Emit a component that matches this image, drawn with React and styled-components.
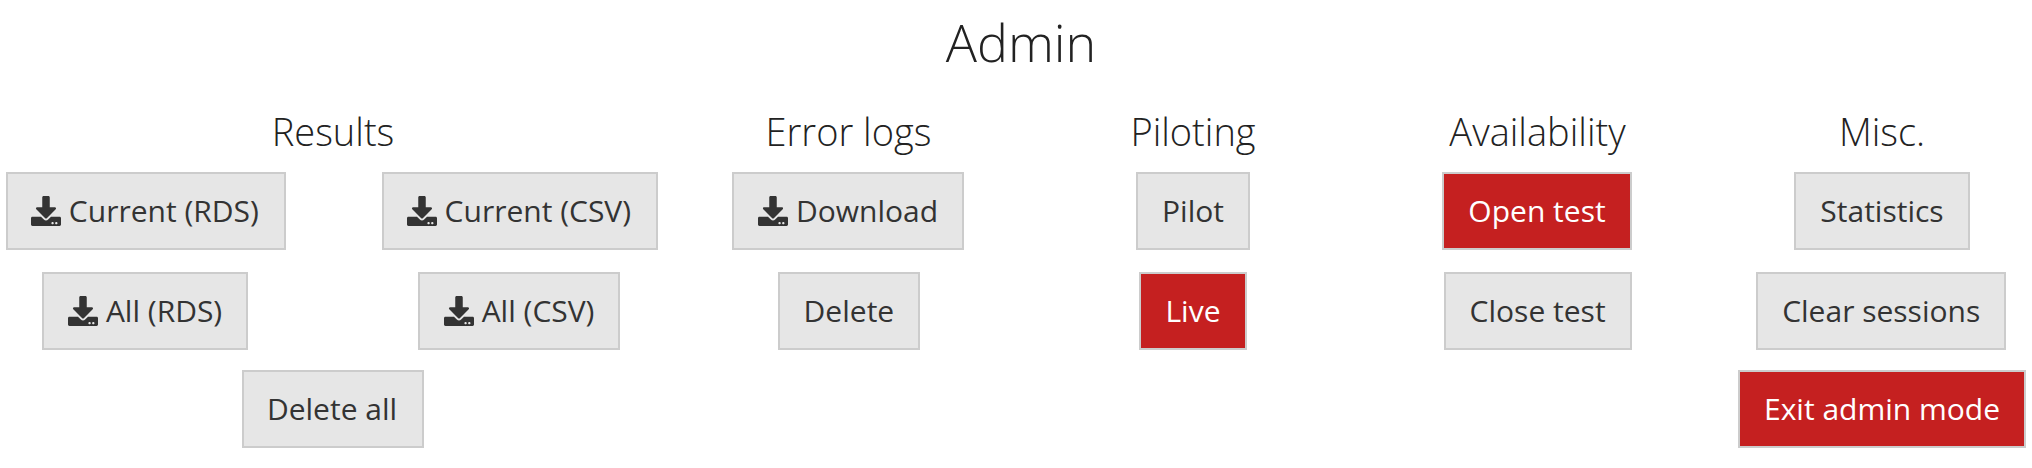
import React from 'react';
import styled, { createGlobalStyle } from 'styled-components';
import { FaDownload } from 'react-icons/fa';

const GlobalStyle = createGlobalStyle`
  body {
    margin: 0;
    background: #fff;
    color: #222;
    font-family: 'Open Sans', sans-serif;
  }
`;

const Page = styled.main`
  width: 2032px;
  height: 468px;
  overflow: hidden;
`;

const Title = styled.h1`
  margin: 0;
  padding-top: 6px;
  padding-left: 10px;
  height: 98px;
  font-size: 52px;
  font-weight: 300;
  line-height: 71px;
  text-align: center;
`;

const Groups = styled.div`
  display: grid;
  grid-template-columns: 666px 365px 324px 365px 324px;
`;

const Group = styled.section`
  display: flex;
  flex-direction: column;
  align-items: center;
`;

const GroupTitle = styled.h2`
  margin: 0;
  height: 68px;
  font-size: 38px;
  font-weight: 300;
  line-height: 54px;
  white-space: nowrap;
`;

const Actions = styled.div`
  display: grid;
  grid-template-rows: 100px 98px 78px;
  grid-template-columns: ${(p) => (p.$paired ? '292px 292px' : 'auto')};
  column-gap: 82px;
  justify-items: center;
  align-items: start;
`;

const Button = styled.button`
  box-sizing: border-box;
  height: 78px;
  margin: 0;
  margin-right: ${(p) => p.$trail || 0}px;
  margin-left: ${(p) => p.$lead || 0}px;
  padding: ${(p) => (p.$pull ? '0 25px 0 23px' : '0 24px')};
  border: 2px solid #ccc;
  border-radius: 0;
  background: ${(p) => (p.$active ? '#c52020' : '#e6e6e6')};
  color: ${(p) => (p.$active ? '#fff' : '#333')};
  font: 400 30px/40px 'Open Sans', sans-serif;
  white-space: nowrap;
  grid-column: ${(p) => (p.$wide ? '1 / -1' : 'auto')};
`;

const DownloadIcon = styled(FaDownload)`
  width: 30px;
  height: 30px;
  margin-right: 7.7px;
  vertical-align: -3.75px;
`;

const GROUPS = [
  {
    title: 'Results',
    paired: true,
    actions: [
      { label: 'Current (RDS)', download: true, pull: true },
      { label: 'Current (CSV)', download: true, pull: true },
      { label: 'All (RDS)', download: true, trail: 1.6 },
      { label: 'All (CSV)', download: true, trail: 1.6 },
      { label: 'Delete all', wide: true, pull: true },
    ],
  },
  {
    title: 'Error logs',
    actions: [
      { label: 'Download', download: true, trail: 0.6 },
      { label: 'Delete', lead: 0.8 },
    ],
  },
  { title: 'Piloting', actions: [{ label: 'Pilot' }, { label: 'Live', active: true }] },
  {
    title: 'Availability',
    actions: [{ label: 'Open test', active: true, trail: 1 }, { label: 'Close test', lead: 0.2 }],
  },
  {
    title: 'Misc.',
    actions: [
      { label: 'Statistics' },
      { label: 'Clear sessions', trail: 1.6 },
      { label: 'Exit admin mode', active: true },
    ],
  },
];

export default function App() {
  return (
    <Page>
      <GlobalStyle />
      <Title>Admin</Title>
      <Groups>
        {GROUPS.map((group) => (
          <Group key={group.title}>
            <GroupTitle>{group.title}</GroupTitle>
            <Actions $paired={group.paired}>
              {group.actions.map((action) => (
                <Button
                  key={action.label}
                  type="button"
                  $active={action.active}
                  $wide={action.wide}
                  $pull={action.pull}
                  $lead={action.lead}
                  $trail={action.trail}
                >
                  {action.download && <DownloadIcon />}
                  {action.label}
                </Button>
              ))}
            </Actions>
          </Group>
        ))}
      </Groups>
    </Page>
  );
}
